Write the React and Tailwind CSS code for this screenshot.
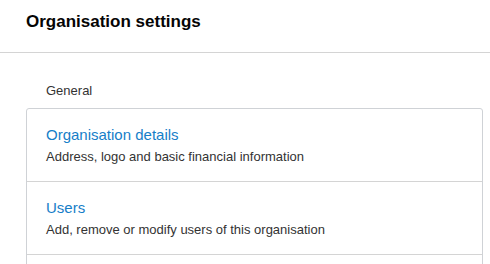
export default function App() {
  const rows = [
    { title: "Organisation details", desc: "Address, logo and basic financial information" },
    { title: "Users", desc: "Add, remove or modify users of this organisation" },
  ];
  return (
    <div className="w-[490px] h-[264px] overflow-hidden bg-white" style={{ fontFamily: '"Liberation Sans", Arial, sans-serif' }}>
      <div className="h-[53px] border-b border-[#d4d4d4] pl-[26px] pt-[13px]">
        <h1 className="text-[17px] leading-none font-bold text-[#050505]">Organisation settings</h1>
      </div>
      <div className="pl-[26px] pr-[7px] pt-[31px]">
        <div className="pl-[20px] text-[13px] leading-none text-[#333]">General</div>
        <div className="mt-[11px] border border-[#cfd2d6] rounded-[3px]">
          {rows.map((r, i) => (
            <div key={i} className={"pl-[19px] py-[18px] " + (i > 0 ? "border-t border-[#d4d4d4]" : "")}>
              <div className="text-[15px] leading-none text-[#167ec8]">{r.title}</div>
              <div className="mt-[8px] text-[13px] leading-none text-[#333]">{r.desc}</div>
            </div>
          ))}
          <div className="h-[72px] border-t border-[#d4d4d4]"></div>
        </div>
      </div>
    </div>
  );
}
